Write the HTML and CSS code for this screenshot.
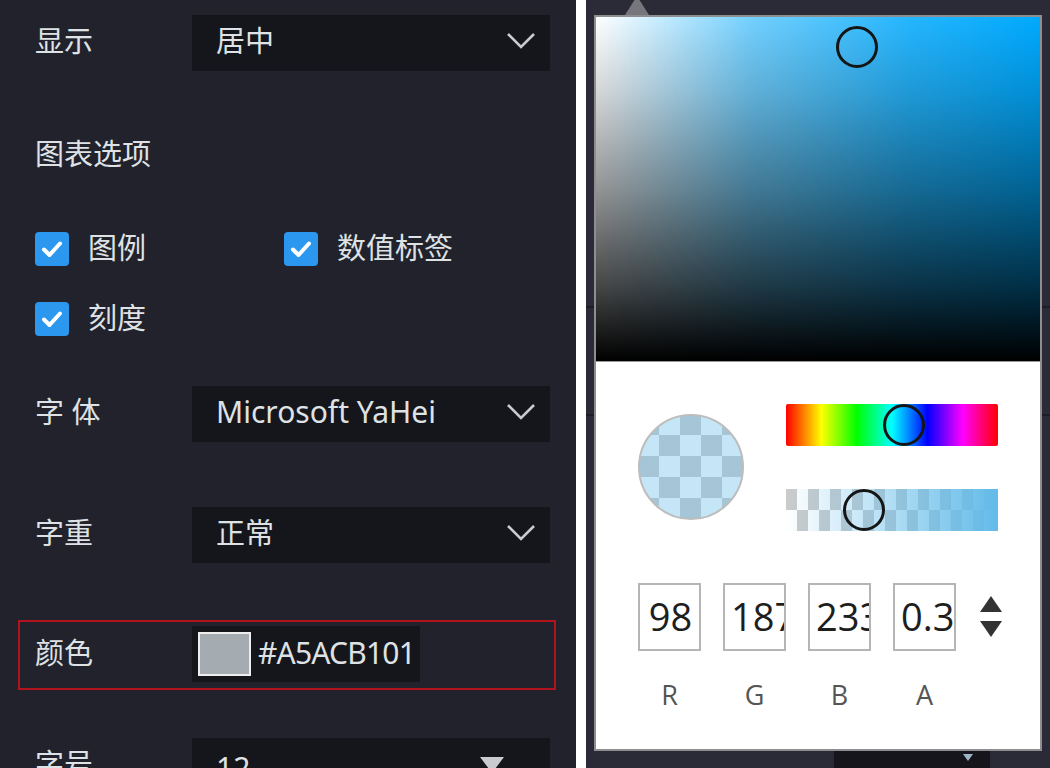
FILE: index.html
```html
<!DOCTYPE html>
<html lang="zh-CN">
<head>
<meta charset="utf-8">
<title>图表设置</title>
<link rel="stylesheet" href="styles.css">
</head>
<body>
<div class="screen">
  <div class="panel">
    <div class="row row-first">
      <span class="label">显示</span>
      <div class="select"><span class="val">居中</span><svg class="chev" viewBox="0 0 30 18" width="30" height="18"><path d="M2 2 L15 15 L28 2" fill="none" stroke="#c9cbce" stroke-width="2.6"/></svg></div>
    </div>
    <div class="heading">图表选项</div>
    <div class="checks">
      <div class="check"><span class="box"><svg viewBox="0 0 34 34" width="34" height="34"><path d="M9 17.5 L14.5 23 L25 11.5" fill="none" stroke="#fff" stroke-width="4" stroke-linecap="round" stroke-linejoin="round"/></svg></span><span class="ctext">图例</span></div>
      <div class="check"><span class="box"><svg viewBox="0 0 34 34" width="34" height="34"><path d="M9 17.5 L14.5 23 L25 11.5" fill="none" stroke="#fff" stroke-width="4" stroke-linecap="round" stroke-linejoin="round"/></svg></span><span class="ctext">数值标签</span></div>
      <div class="check"><span class="box"><svg viewBox="0 0 34 34" width="34" height="34"><path d="M9 17.5 L14.5 23 L25 11.5" fill="none" stroke="#fff" stroke-width="4" stroke-linecap="round" stroke-linejoin="round"/></svg></span><span class="ctext">刻度</span></div>
    </div>
    <div class="row row-font">
      <span class="label">字 体</span>
      <div class="select"><span class="val latin">Microsoft YaHei</span><svg class="chev" viewBox="0 0 30 18" width="30" height="18"><path d="M2 2 L15 15 L28 2" fill="none" stroke="#c9cbce" stroke-width="2.6"/></svg></div>
    </div>
    <div class="row row-weight">
      <span class="label">字重</span>
      <div class="select"><span class="val">正常</span><svg class="chev" viewBox="0 0 30 18" width="30" height="18"><path d="M2 2 L15 15 L28 2" fill="none" stroke="#c9cbce" stroke-width="2.6"/></svg></div>
    </div>
    <div class="row row-color">
      <span class="label">颜色</span>
      <div class="color-input"><span class="swatch"></span><span class="hex">#A5ACB101</span></div>
    </div>
    <div class="row row-size">
      <span class="label">字号</span>
      <div class="select"><span class="val latin">12</span><span class="caret"></span></div>
    </div>
  </div>
  <div class="gap"></div>
  <div class="side">
    <div class="popup">
      <span class="pop-arrow"></span>
      <div class="field"><span class="handle field-handle"></span></div>
      <div class="pbody">
        <div class="ptop">
          <div class="preview"></div>
          <div class="sliders">
            <div class="hue"><span class="handle hue-handle"></span></div>
            <div class="alpha"><span class="handle alpha-handle"></span></div>
          </div>
        </div>
        <div class="inputs">
          <div class="col"><div class="num">98</div><div class="lab">R</div></div>
          <div class="col"><div class="num">187</div><div class="lab">G</div></div>
          <div class="col"><div class="num">233</div><div class="lab">B</div></div>
          <div class="col"><div class="num">0.37</div><div class="lab">A</div></div>
          <div class="spin"><span class="up"></span><span class="down"></span></div>
        </div>
      </div>
    </div>
    <div class="under"><span class="under-caret"></span></div>
  </div>
</div>
</body>
</html>
```
FILE: styles.css
```css
html, body {
  margin: 0;
  padding: 0;
  background: #22222c;
}
.screen {
  display: flex;
  width: 1050px;
  height: 768px;
  overflow: hidden;
  font-family: "Noto Sans", "Noto Sans CJK SC", sans-serif;
}
.panel {
  width: 576px;
  flex: none;
  background: #22222c;
  color: #dfe2e5;
  font-size: 29px;
  line-height: 40px;
}
.gap {
  width: 10px;
  flex: none;
  background: #ffffff;
}
.side {
  flex: 1;
  background-color: #2b2b38;
  background-image:
    linear-gradient(#1c1c25, #1c1c25),
    linear-gradient(#1c1c25, #1c1c25);
  background-size: 100% 2px, 100% 2px;
  background-position: 0 306px, 0 414px;
  background-repeat: no-repeat;
  padding: 15px 0 0 8px;
}

/* left rows */
.row {
  display: flex;
  align-items: center;
  padding-left: 35px;
}
.label {
  width: 157px;
  flex: none;
  padding-bottom: 4px;
}
.select {
  width: 358px;
  height: 56px;
  flex: none;
  box-sizing: border-box;
  background: #15161b;
  display: flex;
  align-items: center;
  justify-content: space-between;
  padding: 0 14px 4px 24px;
}
.latin {
  font-size: 30px;
}
.chev {
  display: block;
}
.row-first { margin-top: 15px; }
.heading {
  margin-top: 63px;
  padding-left: 35px;
}
.checks {
  margin-top: 58px;
  padding-left: 35px;
  display: grid;
  grid-template-columns: 249px auto;
  row-gap: 36px;
}
.check {
  display: flex;
  align-items: center;
  height: 34px;
}
.box {
  width: 34px;
  height: 34px;
  border-radius: 4px;
  background: #2b97ef;
  flex: none;
}
.box svg { display: block; }
.ctext {
  margin-left: 19px;
  padding-bottom: 2px;
}
.row-font { margin-top: 50px; }
.row-weight { margin-top: 65px; }
.row-color {
  margin: 57px 0 0 18px;
  width: 538px;
  height: 70px;
  box-sizing: border-box;
  border: 2px solid #b3131c;
  padding-left: 15px;
}
.color-input {
  width: 228px;
  height: 56px;
  background: #15161b;
  display: flex;
  align-items: center;
  padding-left: 6px;
  box-sizing: border-box;
  margin-top: -2px;
  overflow: hidden;
}
.swatch {
  width: 53px;
  height: 44px;
  box-sizing: border-box;
  border: 2px solid #eeeeee;
  background: #a5acb1;
  flex: none;
}
.hex {
  margin-left: 7px;
  font-size: 30px;
  letter-spacing: -0.8px;
  padding-bottom: 3px;
  white-space: nowrap;
}
.row-size {
  margin-top: 48px;
  align-items: flex-start;
}
.row-size .label { padding-top: 6px; }
.row-size .select {
  align-items: flex-start;
  padding-top: 10px;
  padding-right: 46px;
}
.caret {
  width: 0;
  height: 0;
  border-left: 12px solid transparent;
  border-right: 12px solid transparent;
  border-top: 16px solid #c9cbce;
  margin-top: 9px;
}

/* colour picker */
.popup {
  width: 448px;
  height: 736px;
  box-sizing: border-box;
  border: 2px solid #8e8e90;
  background: #ffffff;
  position: relative;
}
.pop-arrow {
  position: absolute;
  left: 29px;
  top: -21px;
  width: 24px;
  height: 19px;
  background: #76767c;
  clip-path: polygon(50% 0, 100% 100%, 0 100%);
}
.field {
  position: relative;
  height: 344px;
  border-bottom: 1px solid #9a9a9a;
  background:
    linear-gradient(to top, rgba(0, 0, 0, 1) 0%, rgba(0, 0, 0, 0.72) 22%, rgba(0, 0, 0, 0.42) 50%, rgba(0, 0, 0, 0.16) 78%, rgba(0, 0, 0, 0) 100%),
    linear-gradient(to right, rgba(255, 255, 255, 1) 0%, rgba(255, 255, 255, 0.45) 35%, rgba(255, 255, 255, 0.15) 70%, rgba(255, 255, 255, 0) 100%),
    hsl(200, 100%, 50%);
}
.handle {
  position: absolute;
  width: 42px;
  height: 42px;
  box-sizing: border-box;
  border: 3px solid #151515;
  border-radius: 50%;
}
.field-handle { left: 240px; top: 9px; }
.pbody {
  padding: 42px 0 0 42px;
}
.ptop {
  display: flex;
  align-items: flex-start;
}
.preview {
  width: 106px;
  height: 106px;
  margin-top: 10px;
  border-radius: 50%;
  box-sizing: border-box;
  border: 2px solid #bdbdbd;
  background:
    linear-gradient(rgba(98, 187, 233, 0.37), rgba(98, 187, 233, 0.37)),
    repeating-conic-gradient(#ffffff 0 25%, #cccccc 0 50%) 19px 19px / 42px 42px;
}
.sliders {
  margin-left: 42px;
  width: 212px;
  display: flex;
  flex-direction: column;
  gap: 43px;
}
.hue {
  position: relative;
  height: 42px;
  border-radius: 2px;
  background: linear-gradient(to right, #ff0000 0%, #ffff00 16.67%, #00ff00 33.33%, #00ffff 50%, #0000ff 66.67%, #ff00ff 83.33%, #ff0000 100%);
}
.hue-handle { left: 97px; top: 0; }
.alpha {
  position: relative;
  height: 42px;
  background:
    linear-gradient(to right, rgba(98, 187, 233, 0), rgb(98, 187, 233)),
    repeating-conic-gradient(#ffffff 0 25%, #cbcbcb 0 50%) 0 0 / 22px 42px;
}
.alpha-handle { left: 57px; top: 0; }
.inputs {
  display: flex;
  align-items: flex-start;
  margin-top: 52px;
}
.col {
  width: 63px;
  margin-right: 22px;
  display: flex;
  flex-direction: column;
  align-items: center;
}
.num {
  width: 63px;
  height: 68px;
  box-sizing: border-box;
  border: 2px solid #b5b5b5;
  padding: 0 4px 0 6px;
  font-family: "Open Sans", sans-serif;
  font-size: 38px;
  line-height: 62px;
  color: #1e1e1e;
  text-align: center;
  white-space: nowrap;
  overflow: hidden;
}
.lab {
  margin-top: 25px;
  font-family: "Open Sans", sans-serif;
  font-size: 27px;
  line-height: 37px;
  color: #555555;
}
.spin {
  margin-left: 2px;
  margin-top: 13px;
  display: flex;
  flex-direction: column;
  gap: 9px;
}
.up, .down {
  width: 0;
  height: 0;
  border-left: 11px solid transparent;
  border-right: 11px solid transparent;
}
.up { border-bottom: 16px solid #333333; }
.down { border-top: 16px solid #333333; }
.under {
  margin-left: 240px;
  width: 156px;
  height: 20px;
  background: #15151b;
  position: relative;
}
.under-caret {
  position: absolute;
  left: 129px;
  top: 3px;
  width: 0;
  height: 0;
  border-left: 5px solid transparent;
  border-right: 5px solid transparent;
  border-top: 7px solid #9fb6c8;
}
```
